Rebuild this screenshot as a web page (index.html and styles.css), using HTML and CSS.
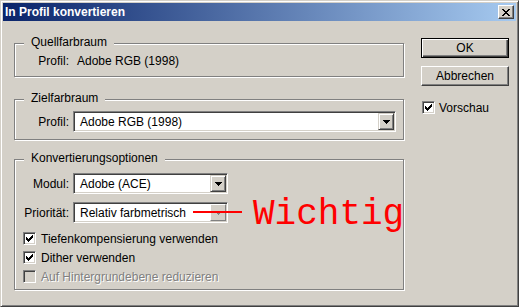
FILE: index.html
```html
<!DOCTYPE html>
<html lang="de">
<head>
  <meta charset="UTF-8" />
  <title>In Profil konvertieren</title>
  <link rel="stylesheet" href="styles.css">
</head>
<body>

  <div class="window">
    <div class="titlebar">
      <span class="title">In Profil konvertieren</span>
      <span class="close">
        <svg width="8" height="7" viewBox="0 0 8 7"><path d="M0 0h2v1h1v1h2v-1h1v-1h2v1h-1v1h-1v1h-1v1h1v1h1v1h1v1h-2v-1h-1v-1h-2v1h-1v1h-2v-1h1v-1h1v-1h1v-1h-1v-1h-1v-1h-1z" fill="#000"/></svg>
      </span>
    </div>

    <div class="client">
      <div class="main">

        <div class="group group-source">
          <div class="group-title">Quellfarbraum</div>
          <div class="field field-static">
            <span class="field-label">Profil:</span>
            <span class="field-value">Adobe RGB (1998)</span>
          </div>
        </div>

        <div class="group group-target">
          <div class="group-title">Zielfarbraum</div>
          <div class="field">
            <span class="field-label">Profil:</span>
            <div class="combo combo-wide">
              <span class="combo-text">Adobe RGB (1998)</span>
              <span class="combo-btn"><svg width="7" height="4" viewBox="0 0 7 4"><path d="M0 0h7v1h-1v1h-1v1h-1v1h-1v-1h-1v-1h-1v-1h-1z" fill="#000"/></svg></span>
            </div>
          </div>
        </div>

        <div class="group group-options">
          <div class="group-title">Konvertierungsoptionen</div>
          <div class="field field-module">
            <span class="field-label">Modul:</span>
            <div class="combo">
              <span class="combo-text">Adobe (ACE)</span>
              <span class="combo-btn"><svg width="7" height="4" viewBox="0 0 7 4"><path d="M0 0h7v1h-1v1h-1v1h-1v1h-1v-1h-1v-1h-1v-1h-1z" fill="#000"/></svg></span>
            </div>
          </div>
          <div class="field field-intent">
            <span class="field-label">Priorität:</span>
            <div class="combo">
              <span class="combo-text">Relativ farbmetrisch</span>
              <span class="combo-btn hot"><svg width="7" height="4" viewBox="0 0 7 4"><path d="M0 0h7v1h-1v1h-1v1h-1v1h-1v-1h-1v-1h-1v-1h-1z" fill="#000"/></svg></span>
            </div>
          </div>

          <div class="checks">
            <label class="check">
              <span class="box"><svg width="7" height="7" viewBox="0 0 7 7"><path d="M6 0h1v3h-1zM5 1h1v3h-1zM4 2h1v3h-1zM3 3h1v3h-1zM2 4h1v3h-1zM1 3h1v3h-1zM0 2h1v3h-1z" fill="#000"/></svg></span>
              <span class="check-text">Tiefenkompensierung verwenden</span>
            </label>
            <label class="check">
              <span class="box"><svg width="7" height="7" viewBox="0 0 7 7"><path d="M6 0h1v3h-1zM5 1h1v3h-1zM4 2h1v3h-1zM3 3h1v3h-1zM2 4h1v3h-1zM1 3h1v3h-1zM0 2h1v3h-1z" fill="#000"/></svg></span>
              <span class="check-text">Dither verwenden</span>
            </label>
            <label class="check disabled">
              <span class="box"></span>
              <span class="check-text">Auf Hintergrundebene reduzieren</span>
            </label>
          </div>
        </div>

      </div>

      <div class="side">
        <span class="btn btn-default">OK</span>
        <span class="btn">Abbrechen</span>
        <label class="check check-preview">
          <span class="box"><svg width="7" height="7" viewBox="0 0 7 7"><path d="M6 0h1v3h-1zM5 1h1v3h-1zM4 2h1v3h-1zM3 3h1v3h-1zM2 4h1v3h-1zM1 3h1v3h-1zM0 2h1v3h-1z" fill="#000"/></svg></span>
          <span class="check-text">Vorschau</span>
        </label>
      </div>
    </div>

    <!-- Anmerkung -->
    <div class="note-line"></div>
    <div class="note-text">Wichtig</div>
  </div>

</body>
</html>
```

FILE: styles.css
```css
html, body {
  margin: 0;
  padding: 0;
}

body {
  font-family: "Liberation Sans", Arial, sans-serif;
  font-size: 12px;
  color: #000;
  background: #d4d0c8;
}

.window {
  position: relative;
  box-sizing: border-box;
  width: 519px;
  height: 307px;
  padding: 2px;
  background: #d4d0c8;
  border: 1px solid;
  border-color: #d4d0c8 #404040 #404040 #d4d0c8;
  box-shadow: inset 1px 1px #fff, inset -1px -1px #808080;
}

.titlebar {
  display: flex;
  align-items: center;
  height: 18px;
  padding: 0 2px;
  background: linear-gradient(to right, #0a246a, #a6caf0);
  color: #fff;
  font-weight: bold;
  line-height: 18px;
}

.close {
  display: flex;
  align-items: center;
  justify-content: center;
  box-sizing: border-box;
  width: 16px;
  height: 14px;
  margin-left: auto;
  background: #d4d0c8;
  border: 1px solid;
  border-color: #fff #404040 #404040 #fff;
  box-shadow: inset -1px -1px #808080;
}

.client {
  display: flex;
  padding: 17px 0 0 11px;
}

.main {
  width: 390px;
  padding-top: 5px;
}

.side {
  display: flex;
  flex-direction: column;
  width: 88px;
  margin-left: 17px;
}

/* Gruppenrahmen */
.group {
  border: 1px solid #808080;
  box-shadow: inset 1px 1px #fff, 1px 1px #fff;
}

.group-title {
  width: max-content;
  margin: -9px 0 0 9px;
  padding: 0 7px;
  line-height: 14px;
  background: #d4d0c8;
}

.group-source {
  padding-bottom: 8px;
}

.group-target {
  margin-top: 22px;
  padding-bottom: 7px;
}

.group-options {
  margin-top: 19px;
  padding-bottom: 3px;
}

.field {
  display: flex;
  align-items: center;
  line-height: 14px;
}

.field-label {
  width: 54px;
  margin-right: 4px;
  text-align: right;
}

.field-static {
  margin-top: 5px;
}

.field-static .field-label {
  margin-right: 8px;
}

.group-target .field {
  margin-top: 6px;
}

.field-module,
.field-intent {
  margin-top: 8px;
}

/* Kombinationsfeld */
.combo {
  display: flex;
  align-items: center;
  box-sizing: border-box;
  width: 155px;
  height: 21px;
  padding: 1px;
  background: #fff;
  border: 1px solid;
  border-color: #808080 #fff #fff #808080;
  box-shadow: inset 1px 1px #404040, inset -1px -1px #d4d0c8;
}

.combo-wide {
  width: 323px;
}

.combo-text {
  flex: 1;
  padding-left: 5px;
  white-space: nowrap;
}

.combo-btn {
  display: flex;
  align-items: center;
  justify-content: center;
  box-sizing: border-box;
  width: 16px;
  height: 17px;
  background: #d4d0c8;
  border: 1px solid;
  border-color: #d4d0c8 #404040 #404040 #d4d0c8;
  box-shadow: inset 1px 1px #fff, inset -1px -1px #808080;
}

.combo-btn.hot {
  border-color: #fff #808080 #808080 #fff;
  box-shadow: none;
}

.combo-btn.hot svg path {
  fill: #808080;
}

/* Kontrollkästchen */
.checks {
  margin-top: 6px;
  padding-left: 8px;
}

.check {
  display: flex;
  align-items: center;
  height: 19px;
}

.box {
  display: flex;
  align-items: center;
  justify-content: center;
  box-sizing: border-box;
  width: 13px;
  height: 13px;
  background: #fff;
  border: 1px solid;
  border-color: #808080 #fff #fff #808080;
  box-shadow: inset 1px 1px #404040, inset -1px -1px #d4d0c8;
}

.check-text {
  margin-left: 5px;
}

.check.disabled .box {
  background: #d4d0c8;
}

.check.disabled .check-text {
  color: #808080;
  text-shadow: 1px 1px #fff;
}

.check-preview {
  margin-top: 12px;
  padding-left: 1px;
}

.check-preview .check-text {
  margin-left: 4px;
}

/* Schaltflächen */
.btn {
  display: flex;
  align-items: center;
  justify-content: center;
  box-sizing: border-box;
  height: 20px;
  background: #d4d0c8;
  border: 1px solid;
  border-color: #fff #404040 #404040 #fff;
  box-shadow: inset -1px -1px #808080;
}

.btn + .btn {
  margin-top: 8px;
}

.btn-default {
  border-color: #000;
  box-shadow: inset 1px 1px #fff, inset -1px -1px #404040, inset -2px -2px #808080;
}

/* rote Markierung */
.note-line {
  position: absolute;
  left: 192px;
  top: 210px;
  width: 49px;
  height: 2px;
  background: #f00;
}

.note-text {
  position: absolute;
  left: 252px;
  top: 196px;
  font-family: "Liberation Mono", "Courier New", monospace;
  font-size: 36px;
  line-height: 36px;
  color: #f00;
}
```
